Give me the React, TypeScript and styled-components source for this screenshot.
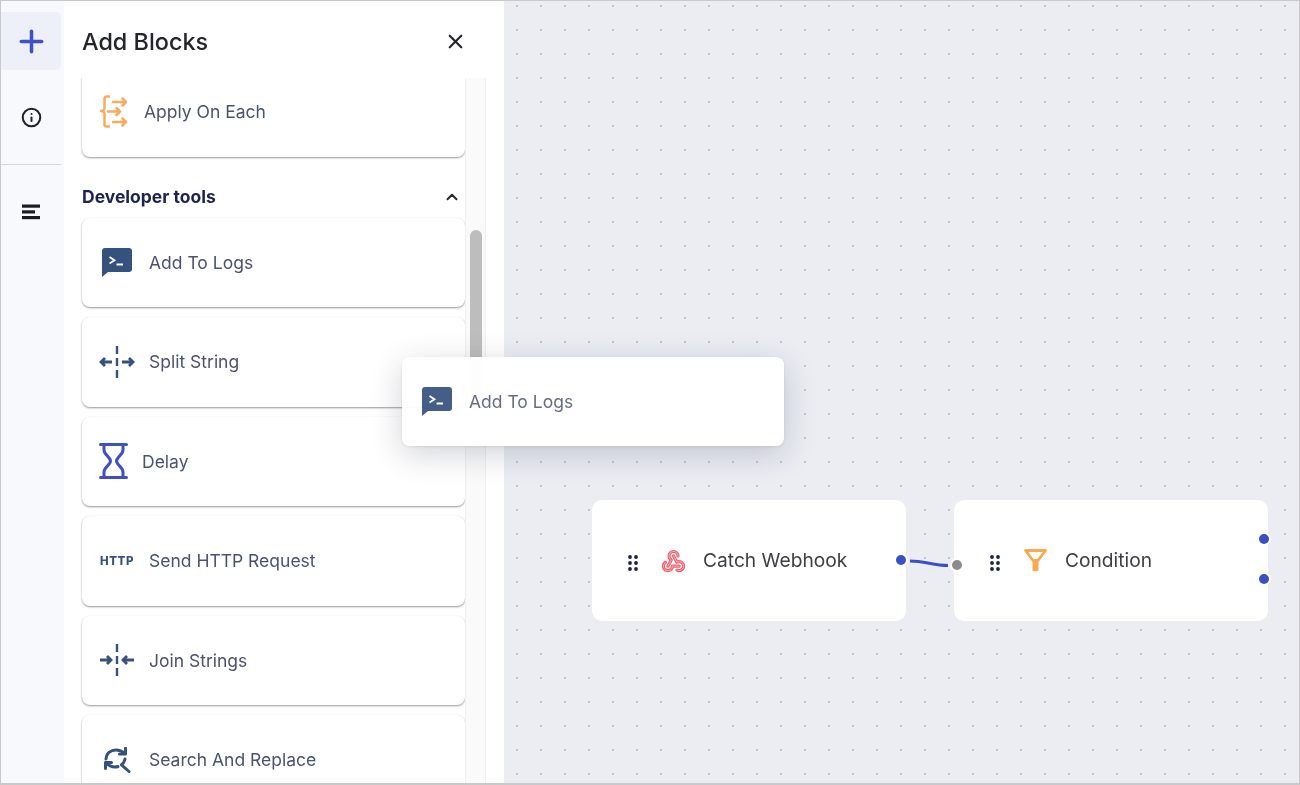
import React from "react";
import styled, { createGlobalStyle } from "styled-components";
import { Plus, X, ChevronUp, Info } from "lucide-react";

const Global = createGlobalStyle`
  html, body { margin: 0; padding: 0; background: #fff; }
  body { font-family: Inter, "Liberation Sans", sans-serif; }
  * { box-sizing: border-box; }
`;

const Frame = styled.div`
  width: 1300px;
  height: 785px;
  display: flex;
  overflow: hidden;
  position: relative;
  border: 1px solid #c9c9c9;
  border-bottom-width: 2px;
  background: #fff;
  filter: blur(0.3px);
`;

const Rail = styled.nav`
  width: 63px;
  flex: none;
  display: flex;
  flex-direction: column;
  align-items: stretch;
  padding-top: 11px;
  background: #f8f9fc;
`;

const RailButton = styled.div<{ $active?: boolean; $h: number }>`
  height: ${(p) => p.$h}px;
  width: 60px;
  display: flex;
  align-items: center;
  justify-content: center;
  border-radius: 0 5px 5px 0;
  color: ${(p) => (p.$active ? "#3f51c6" : "#222")};
  background: ${(p) => (p.$active ? "#eef0f9" : "transparent")};
`;

const RailDivider = styled.div`
  height: 1px;
  width: 60px;
  background: #d5d7df;
`;

const Panel = styled.aside`
  width: 440px;
  flex: none;
  display: flex;
  flex-direction: column;
  background: #fff;
`;

const PanelHeader = styled.header`
  height: 77px;
  flex: none;
  display: flex;
  align-items: center;
  justify-content: space-between;
  padding: 7px 37px 4px 18px;
`;

const Title = styled.h1`
  margin: 0;
  font-size: 23.4px;
  font-weight: 500;
  color: #23252b;
`;

const CloseButton = styled.div`
  display: flex;
  color: #23252b;
`;

const PanelBody = styled.div`
  flex: 1;
  min-height: 0;
  display: flex;
  padding-left: 18px;
  overflow: hidden;
`;

const BlockList = styled.div`
  width: 383px;
  flex: none;
  margin-top: -11px;
  display: flex;
  flex-direction: column;
`;

const Card = styled.div`
  height: 89.5px;
  flex: none;
  display: flex;
  align-items: center;
  gap: 14px;
  padding-left: 17px;
  margin-bottom: 10px;
  border-radius: 8px;
  background: #fff;
  box-shadow: 0 1px 2px rgba(40, 40, 40, 0.48), 0 0 1px rgba(0, 0, 0, 0.03);
`;

const IconSlot = styled.div<{ $w: number }>`
  width: ${(p) => p.$w}px;
  flex: none;
  display: flex;
  align-items: center;
  justify-content: center;
`;

const CardLabel = styled.span`
  font-size: 17.5px;
  font-weight: 400;
  color: #4b5270;
  white-space: nowrap;
`;

const SectionHeader = styled.div`
  height: 20px;
  flex: none;
  margin: 20px 0 11px;
  padding-right: 4px;
  display: flex;
  align-items: center;
  justify-content: space-between;
  color: #1c2350;
  font-size: 17.5px;
  font-weight: 700;
`;

const HttpMark = styled.span`
  font-size: 11.5px;
  font-weight: 800;
  letter-spacing: 0.6px;
  color: #35517d;
`;

const Track = styled.div`
  width: 21px;
  flex: none;
  background: #fafafa;
  border-left: 1px solid #efefef;
  border-right: 1px solid #efefef;
  padding: 152px 3px 0 4px;
`;

const Thumb = styled.div`
  height: 170px;
  border-radius: 6px;
  background: #bdbdbd;
`;

const Canvas = styled.main`
  flex: 1;
  position: relative;
  background-color: #ebedf3;
  background-image: radial-gradient(circle, #c2c4cb 0.8px, transparent 1.1px);
  background-size: 24px 24px;
  background-position: 1px -7px;
`;

const Node = styled.div<{ $x: number; $y: number }>`
  position: absolute;
  left: ${(p) => p.$x}px;
  top: ${(p) => p.$y}px;
  width: 314px;
  height: 121px;
  display: flex;
  align-items: center;
  padding-left: 36px;
  border-radius: 10px;
  background: #fff;
`;

const Grip = styled.div`
  width: 10px;
  display: flex;
  margin: 5px 21px 0 0;
  flex: none;
`;

const NodeIcon = styled.div`
  width: 28px;
  margin-right: 16px;
  display: flex;
  justify-content: center;
  flex: none;
`;

const NodeLabel = styled.span`
  font-size: 19.2px;
  color: #3f4045;
  white-space: nowrap;
  margin-top: -2px;
`;

const Handle = styled.div<{ $x: number; $y: number; $grey?: boolean }>`
  position: absolute;
  left: ${(p) => p.$x - 7}px;
  top: ${(p) => p.$y - 7}px;
  width: 14px;
  height: 14px;
  border-radius: 50%;
  border: 2px solid #fff;
  background: ${(p) => (p.$grey ? "#8b8d8d" : "#3a4ec6")};
`;

const EdgeSvg = styled.svg`
  position: absolute;
  left: 0;
  top: 0;
  overflow: visible;
`;

const Ghost = styled.div`
  position: absolute;
  left: 401px;
  top: 356px;
  width: 382px;
  height: 89px;
  display: flex;
  align-items: center;
  gap: 14px;
  padding-left: 17px;
  border-radius: 8px;
  background: rgba(255, 255, 255, 0.96);
  box-shadow: 0 8px 32px rgba(30, 35, 60, 0.2), 0 1px 3px rgba(0, 0, 0, 0.08);
`;

const GhostIcon = styled(IconSlot)`
  opacity: 0.92;
`;

const GhostLabel = styled(CardLabel)`
  opacity: 0.85;
`;

const LogsIcon = () => (
  <svg width="30" height="29" viewBox="0 0 30 29">
    <path d="M3 0H27a3 3 0 0 1 3 3V21a3 3 0 0 1-3 3H6L0 29V3a3 3 0 0 1 3-3z" fill="#35517d" />
    <path d="M7.500 9l5 3.200-5 3.200M14.500 16.500H21" fill="none" stroke="#fff" strokeWidth="1.800" />
  </svg>
);

const ApplyIcon = () => (
  <svg width="29" height="33" viewBox="1 0 29 33" fill="none" stroke="#f6ab5f" strokeWidth="2.500" strokeLinecap="round" strokeLinejoin="round">
    <path d="M10 1.500H7.500a2 2 0 0 0-2 2V13a3 3 0 0 1-3.500 3a3 3 0 0 1 3.500 3V29.500a2 2 0 0 0 2 2H10" />
    <path d="M14 7H27M23.500 3.500L27 7L23.500 10.500" />
    <path d="M9 16.500H21M17.500 13L21 16.500L17.500 20" />
    <path d="M14 27H27M23.500 23.500L27 27L23.500 30.500" />
  </svg>
);

const SplitIcon = ({ join }: { join?: boolean }) => (
  <svg width="36" height="32" viewBox="0 0 36 32" fill="none" stroke="#35517d" strokeWidth="2.400">
    <path d="M18 0V8M18 12V20M18 24V32" />
    {join ? (
      <path d="M1 16H12M8 12L12 16L8 20M35 16H24M28 12L24 16L28 20" strokeWidth="2.800" />
    ) : (
      <path d="M13 16H2M6 12L2 16L6 20M23 16H34M30 12L34 16L30 20" strokeWidth="2.800" />
    )}
  </svg>
);

const HourglassIcon = () => (
  <svg width="29" height="36" viewBox="0 0 29 36" fill="none" stroke="#3f50c4" strokeWidth="3" strokeLinecap="round" strokeLinejoin="round">
    <path d="M1.500 1.500H27.500M1.500 34.500H27.500" />
    <path d="M5 1.500V7C5 12 11.500 14 11.500 18C11.500 22 5 24 5 29V34.500M24 1.500V7C24 12 17.500 14 17.500 18C17.500 22 24 24 24 29V34.500" />
  </svg>
);

const ReplaceIcon = () => (
  <svg width="27" height="26" viewBox="0 0 27 26" fill="none" stroke="#35517d" strokeWidth="3" strokeLinecap="round" strokeLinejoin="round">
    <path d="M2 12C2.500 6 7 3 12 3C15 3 18 4 21 6.500" />
    <path d="M21.500 1V7H15.500" />
    <path d="M1.500 21.500V15.500H7.500" />
    <path d="M2 15.500C5 19 8 20 11 20C12 20 13 19.800 14 19.500" />
    <path d="M21 12C20.500 14.500 19.200 16.500 17.500 17.800L25 24.500" />
  </svg>
);

const AlignIcon = () => (
  <svg width="18" height="16" viewBox="0 0 18 16" fill="#1c1c1f">
    <rect x="0" y="0.500" width="18" height="3.200" />
    <rect x="0" y="6.300" width="13" height="3.200" />
    <rect x="0" y="12" width="18" height="3.200" />
  </svg>
);

const GripIcon = () => (
  <svg width="10" height="16" viewBox="0 0 10 16" fill="#1c2340">
    {[2, 8].map((x) => [2, 8, 14].map((y) => <circle key={`${x}-${y}`} cx={x} cy={y} r="1.900" />))}
  </svg>
);

const hookPaths = [
  "M4.876 13.610a4 4 0 1 0 6.124 3.390h6",
  "M15.066 20.502a4 4 0 1 0 1.934-7.502c-.706 0-1.424.179-2 .5l-3-5.500",
  "M16 8a4 4 0 1 0-8 0c0 1.506.77 2.818 2 3.500l-3 5.500",
];

const HookIcon = () => (
  <svg width="27" height="27" viewBox="0 0 24 24" fill="none" strokeLinecap="round" strokeLinejoin="round">
    {hookPaths.map((d) => <path key={d} d={d} stroke="#ef5d6a" strokeWidth="2.800" />)}
    {hookPaths.map((d) => <path key={`i${d}`} d={d} stroke="#fbc6ca" strokeWidth="0.700" />)}
  </svg>
);

const FunnelIcon = () => (
  <svg width="23" height="23" viewBox="0 0 23 23">
    <path d="M1.500 1.500H21.500L14 11.500H9Z" fill="none" stroke="#f8aa50" strokeWidth="2.800" strokeLinejoin="round" />
    <path d="M8.500 10.500H14.500V22H8.500Z" fill="#f8aa50" />
  </svg>
);

type Block = { label: string; w: number; icon: React.ReactNode };

const blocks: Block[] = [
  { label: "Add To Logs", w: 36, icon: <LogsIcon /> },
  { label: "Split String", w: 36, icon: <SplitIcon /> },
  { label: "Delay", w: 29, icon: <HourglassIcon /> },
  { label: "Send HTTP Request", w: 36, icon: <HttpMark>HTTP</HttpMark> },
  { label: "Join Strings", w: 36, icon: <SplitIcon join /> },
  { label: "Search And Replace", w: 36, icon: <ReplaceIcon /> },
];

export default function App() {
  return (
    <Frame>
      <Global />
      <Rail>
        <RailButton $active $h={58}>
          <Plus size={35} strokeWidth={2.4} />
        </RailButton>
        <RailButton $h={94}>
          <Info size={21} strokeWidth={2.3} />
        </RailButton>
        <RailDivider />
        <RailButton $h={94}>
          <AlignIcon />
        </RailButton>
      </Rail>
      <Panel>
        <PanelHeader>
          <Title>Add Blocks</Title>
          <CloseButton>
            <X size={23} strokeWidth={2.3} />
          </CloseButton>
        </PanelHeader>
        <PanelBody>
          <BlockList>
            <Card>
              <IconSlot $w={31}>
                <ApplyIcon />
              </IconSlot>
              <CardLabel>Apply On Each</CardLabel>
            </Card>
            <SectionHeader>
              Developer tools
              <ChevronUp size={18} strokeWidth={2.6} color="#23252b" />
            </SectionHeader>
            {blocks.map((b) => (
              <Card key={b.label}>
                <IconSlot $w={b.w}>{b.icon}</IconSlot>
                <CardLabel>{b.label}</CardLabel>
              </Card>
            ))}
          </BlockList>
          <Track>
            <Thumb />
          </Track>
        </PanelBody>
      </Panel>
      <Canvas>
        <Node $x={88} $y={499}>
          <Grip><GripIcon /></Grip>
          <NodeIcon><HookIcon /></NodeIcon>
          <NodeLabel>Catch Webhook</NodeLabel>
        </Node>
        <Node $x={450} $y={499}>
          <Grip><GripIcon /></Grip>
          <NodeIcon><FunnelIcon /></NodeIcon>
          <NodeLabel>Condition</NodeLabel>
        </Node>
        <EdgeSvg width="800" height="784">
          <path d="M406 560 C420 560 430 564.500 444 564.500" fill="none" stroke="#3a4ec6" strokeWidth="3" />
        </EdgeSvg>
        <Handle $x={397} $y={559} />
        <Handle $x={453} $y={564} $grey />
        <Handle $x={760} $y={538} />
        <Handle $x={760} $y={578} />
      </Canvas>
      <Ghost>
        <GhostIcon $w={36}><LogsIcon /></GhostIcon>
        <GhostLabel>Add To Logs</GhostLabel>
      </Ghost>
    </Frame>
  );
}
